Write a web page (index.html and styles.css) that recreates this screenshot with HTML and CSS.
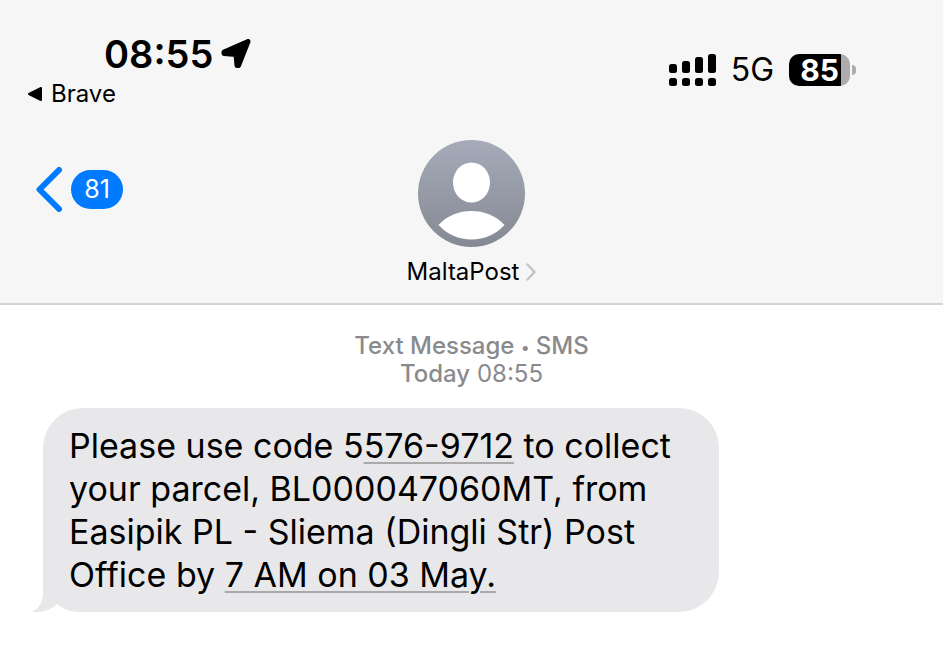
FILE: index.html
```html
<!DOCTYPE html>
<html lang="en">
<head>
  <meta charset="UTF-8" />
  <meta name="viewport" content="width=device-width, initial-scale=1.0"/>
  <title>MaltaPost</title>
  <link rel="stylesheet" href="styles.css">
</head>

<body>
  <header class="header">
    <div class="status-bar">
      <div class="status-left">
        <div class="clock">
          <time>08:55</time>
          <svg class="location" width="30" height="30" viewBox="0 0 30 30">
            <path d="M27 2.500 L17.500 26.500 L16 26.500 L15 15.500 L3 14.500 L3 13 Z" fill="#000" stroke="#000" stroke-width="5" stroke-linejoin="round"/>
          </svg>
        </div>
        <a href="#" class="back-app">
          <svg width="16" height="16" viewBox="0 0 16 16">
            <path d="M2 8 L14 2 V14 Z" stroke="#000" stroke-width="2" stroke-linejoin="round"/>
          </svg>
          <span>Brave</span>
        </a>
      </div>

      <div class="status-right">
        <svg class="signal" width="47" height="32" viewBox="0 0 47 32">
          <rect x="0" y="10" width="8" height="9" rx="2.5"/>
          <rect x="13" y="7" width="8" height="12" rx="2.5"/>
          <rect x="26" y="3" width="8" height="16" rx="2.5"/>
          <rect x="39" y="0" width="8" height="19" rx="2.5"/>
          <rect x="0" y="24" width="8" height="8" rx="2.5"/>
          <rect x="13" y="24" width="8" height="8" rx="2.5"/>
          <rect x="26" y="24" width="8" height="8" rx="2.5"/>
          <rect x="39" y="24" width="8" height="8" rx="2.5"/>
        </svg>
        <span class="network">5G</span>
        <div class="battery">
          <span class="battery-level">85</span>
          <span class="battery-cap"></span>
        </div>
      </div>
    </div>

    <nav class="nav">
      <a href="#" class="back" aria-label="Back, 81 unread">
        <svg width="28" height="46" viewBox="0 0 28 46">
          <path d="M24 4 L4.500 23.500 L24 43" fill="none" stroke="#007aff" stroke-width="6" stroke-linecap="round" stroke-linejoin="round"/>
        </svg>
        <span class="unread">81</span>
      </a>

      <a href="#" class="contact">
        <svg class="avatar" width="107" height="107" viewBox="0 0 107 107">
          <defs>
            <linearGradient id="avatar-fill" x1="0" y1="0" x2="0" y2="1">
              <stop offset="0" stop-color="#a5abb9"/>
              <stop offset="1" stop-color="#858993"/>
            </linearGradient>
          </defs>
          <circle cx="53.5" cy="53.5" r="53.5" fill="url(#avatar-fill)"/>
          <ellipse cx="53.5" cy="42.5" rx="18.5" ry="20" fill="#fff"/>
          <path d="M20.500 85 C29 75.500 41 71 53.500 71 C66 71 78 75.500 86.500 85 C78 94.500 66 99.500 53.500 99.500 C41 99.500 29 94.500 20.500 85 Z" fill="#fff"/>
        </svg>
        <span class="contact-name">
          MaltaPost
          <svg width="10" height="18" viewBox="0 0 10 18">
            <path d="M1.500 1.500 L8.500 9 L1.500 16.500" fill="none" stroke="#c4c4c7" stroke-width="2.500" stroke-linecap="round" stroke-linejoin="round"/>
          </svg>
        </span>
      </a>
    </nav>
  </header>

  <main class="thread">
    <p class="stamp">
      <span class="stamp-strong">Text Message <span class="dot">•</span> SMS</span><br>
      <span class="stamp-strong">Today</span> 08:55
    </p>

    <div class="bubble">
      <p class="message">Please use code 5<a href="#">576-9712</a> to collect your parcel, BL000047060MT, from Easipik PL - Sliema (Dingli Str) Post Office by <a href="#">7 AM on 03 May.</a></p>
      <svg class="tail" width="48" height="48" viewBox="0 0 48 48">
        <path d="M11 0 V28 C11 37 8 44 0 48 C10 49 19 46 25 40 C31 45 38 48 48 48 V0 Z" fill="#e8e8eb"/>
      </svg>
    </div>
  </main>
</body>
</html>
```

FILE: styles.css
```css
* {
  box-sizing: border-box;
}

body {
  font-family: Inter, "Liberation Sans", sans-serif;
  margin: 0;
  background-color: #fff;
  color: #000;
}

a {
  color: inherit;
  text-decoration: none;
}

.header {
  background-color: #f6f6f6;
  border-bottom: 2px solid #d4d4d6;
  padding: 32px 0 16px;
}

/* status bar */
.status-bar {
  display: flex;
  justify-content: space-between;
  padding: 0 87px 0 27px;
}

.clock {
  display: flex;
  align-items: center;
  gap: 8px;
  padding-left: 77px;
  font-size: 38px;
  font-weight: 600;
  line-height: 44px;
}

.back-app {
  display: flex;
  align-items: center;
  gap: 8px;
  padding-top: 4px;
  font-size: 24px;
  line-height: 28px;
}

.status-right {
  display: flex;
  align-items: center;
  gap: 15px;
}

.network {
  font-size: 32px;
  line-height: 32px;
}

.battery {
  display: flex;
  align-items: center;
  gap: 2px;
}

.battery-level {
  width: 61px;
  height: 32px;
  border-radius: 10px;
  background: linear-gradient(to right, #000 85%, #adadad 85%);
  color: #fff;
  font-size: 30px;
  font-weight: 700;
  line-height: 32px;
  text-align: center;
}

.battery-cap {
  width: 4px;
  height: 10px;
  border-radius: 0 5px 5px 0;
  background-color: #adadad;
}

/* navigation */
.nav {
  display: grid;
  grid-template-columns: 1fr auto 1fr;
  padding: 32px 35px 0;
}

.back {
  display: flex;
  align-items: center;
  align-self: start;
  gap: 8px;
  padding-top: 26px;
}

.unread {
  min-width: 52px;
  border-radius: 20px;
  background-color: #007aff;
  color: #fff;
  font-size: 25px;
  line-height: 39px;
  text-align: center;
}

.contact {
  display: flex;
  flex-direction: column;
  align-items: center;
  gap: 10px;
}

.contact-name {
  display: flex;
  align-items: center;
  gap: 7px;
  font-size: 24px;
  line-height: 30px;
}

/* messages */
.thread {
  padding: 27px 43px;
}

.stamp {
  margin: 0 0 20px;
  color: #8a8a8e;
  font-size: 24px;
  line-height: 28px;
  text-align: center;
}

.stamp-strong {
  font-weight: 500;
}

.dot {
  font-size: 16px;
  line-height: 16px;
  vertical-align: middle;
}

.bubble {
  position: relative;
  max-width: 676px;
  padding: 16px 26px;
  border-radius: 40px;
  background-color: #e8e8eb;
}

.message {
  margin: 0;
  font-size: 34px;
  line-height: 43px;
}

.message a {
  text-decoration: underline;
  text-decoration-color: #a9a9ac;
  text-decoration-thickness: 2px;
  text-underline-offset: 4px;
}

.tail {
  position: absolute;
  left: -11px;
  bottom: 0;
  z-index: -1;
}
```
